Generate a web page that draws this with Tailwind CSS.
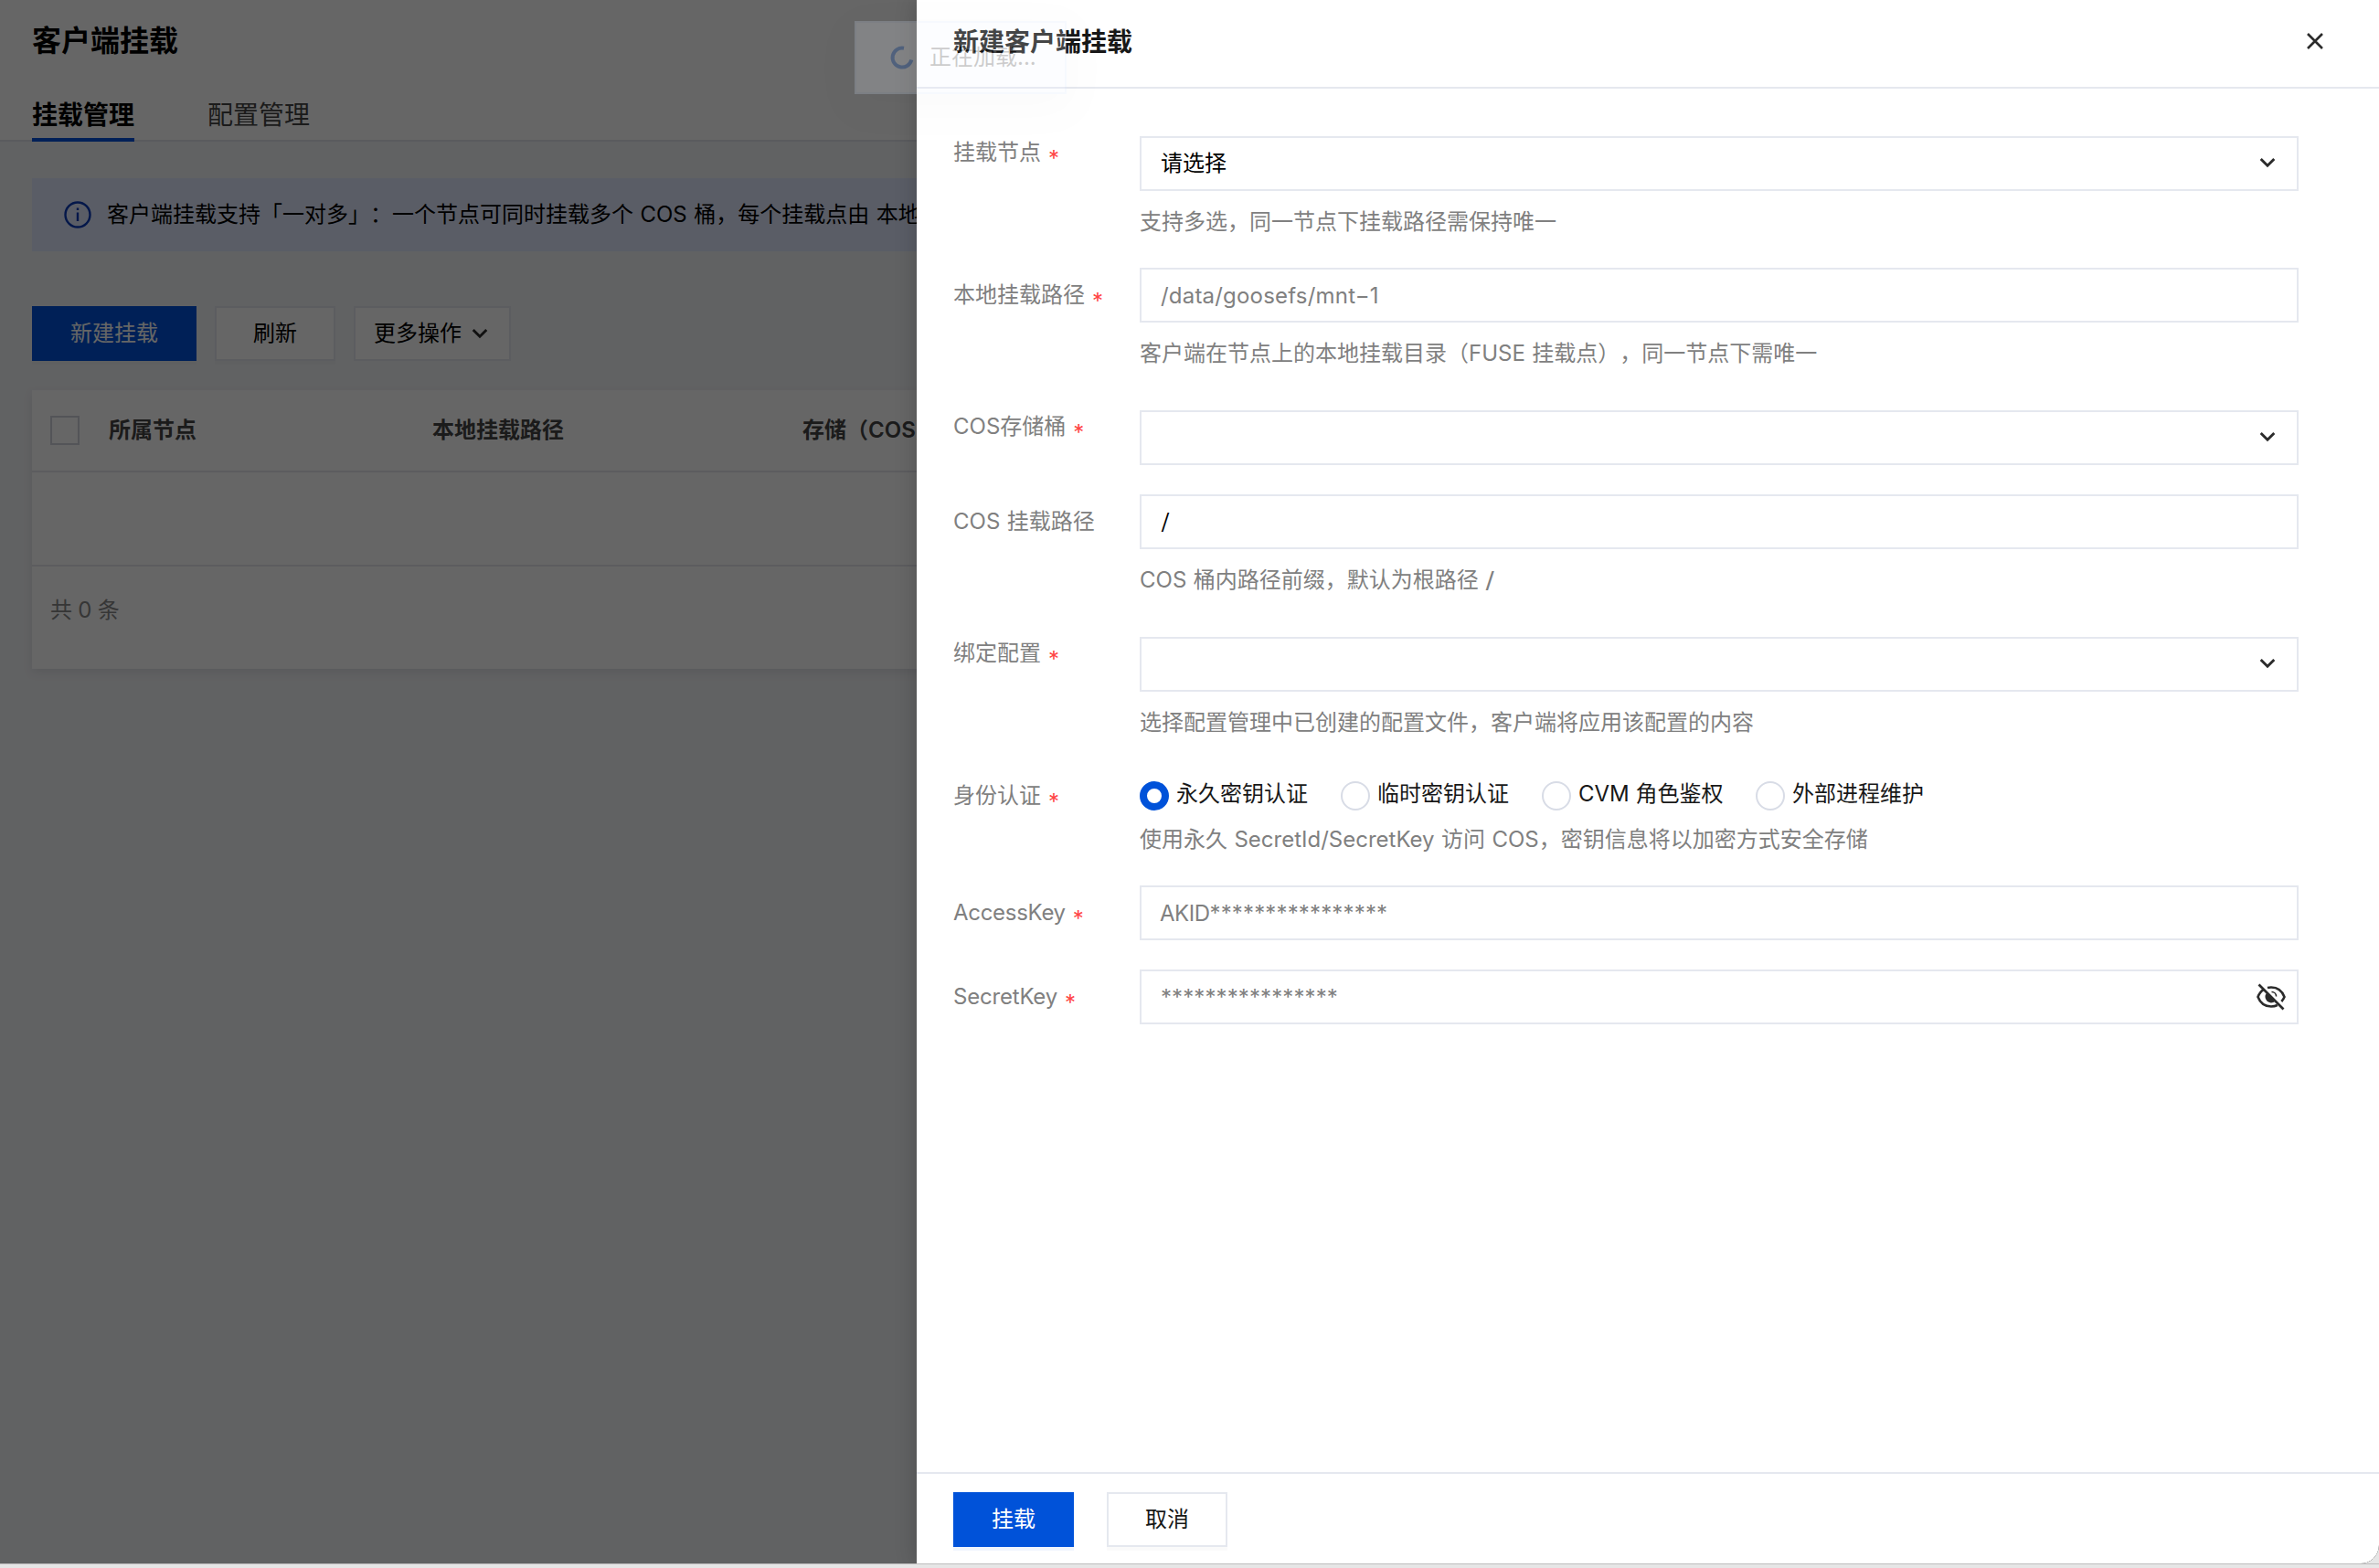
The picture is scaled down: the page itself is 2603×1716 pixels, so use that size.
<!DOCTYPE html>
<html lang="zh-CN">
<head>
<meta charset="utf-8">
<title>客户端挂载</title>
<script src="https://cdn.jsdelivr.net/npm/@tailwindcss/browser@4"></script>
</head>
<body class="relative h-[1716px] w-[2603px] overflow-hidden bg-[#e6e6e6] font-['Inter','Noto_Sans_CJK_SC',sans-serif] text-2xl leading-9 text-[#181818] [text-spacing-trim:space-all] [word-spacing:0.7px]">
<svg class="hidden">
  <symbol id="chev" viewBox="0 0 20 14"><path d="M2.700 3l7.300 7.300 7.300-7.300" fill="none" stroke="#2b2b2b" stroke-width="2.900"/></symbol>
</svg>

<div class="relative h-[1711px] overflow-hidden rounded-br-[20px] bg-[#f3f4f7]">
  <!-- page -->
  <header class="h-[155px] border-b-2 border-[#e1e3ea] bg-white px-[35px] pt-[25px]">
    <h1 class="text-[32px] font-bold leading-10 text-black">客户端挂载</h1>
    <nav class="mt-[38px] flex h-[52px] gap-20 text-[28px] leading-[46px]">
      <span class="h-[52px] border-b-4 border-[#0052d9] font-bold text-black">挂载管理</span>
      <span class="text-[#444]">配置管理</span>
    </nav>
  </header>
  <main class="px-[35px] pt-10">
    <div class="flex h-20 items-center bg-[#e2e9ff] pl-[35px]">
      <svg class="mr-[17px] size-[30px]" viewBox="0 0 30 30" fill="none" stroke="#0a3bb8" stroke-width="2.4"><circle cx="15" cy="15" r="13.5"/><path d="M15 12.5v9.5M15 7.5v2.6"/></svg>
      <p class="whitespace-nowrap text-black">客户端挂载支持「一对多」：一个节点可同时挂载多个 COS 桶，每个挂载点由 本地挂载路径</p>
    </div>
    <div class="mt-15 flex gap-5">
      <button class="h-15 w-[180px] bg-[#0052d9] text-white shadow-[0_4px_0_rgba(0,0,0,0.02)]">新建挂载</button>
      <button class="h-15 w-[132px] border-2 border-[#e5e8ef] bg-white text-black shadow-[0_4px_0_rgba(0,0,0,0.02)]">刷新</button>
      <button class="flex h-15 w-[172px] items-center gap-[10px] border-2 border-[#e5e8ef] bg-white pl-5 text-black">更多操作<svg class="mb-px h-[14px] w-5"><use href="#chev"/></svg></button>
    </div>
    <section class="mt-8 h-[305px] bg-white shadow-[0_4px_10px_rgba(54,58,80,0.1)]">
      <div class="flex h-[90px] items-center border-b-2 border-[#e5e6ee] pl-5 font-bold text-[#444]">
        <span class="mr-8 size-8 border-2 border-[#d0d2dc]"></span>
        <span class="w-[354px]">所属节点</span>
        <span class="w-[405px]">本地挂载路径</span>
        <span class="font-semibold">存储（COS）</span>
      </div>
      <div class="h-[103px] border-b-2 border-[#e5e6ee]"></div>
      <div class="pl-5 pt-[30px] text-[#888] [word-spacing:-0.5px]">共 0 条</div>
    </section>
  </main>
  <div class="absolute inset-0 bg-black/60"></div>

  <!-- drawer -->
  <aside class="absolute inset-y-0 left-[1003px] right-0 flex flex-col rounded-br-[20px] bg-white shadow-[0_0_24px_rgba(0,0,0,0.2)]">
    <div class="flex h-[97px] items-start justify-between border-b-2 border-[#e5e8ef] pl-10 pr-[60px] pt-[26px]">
      <h2 class="text-[28px] font-bold leading-10">新建客户端挂载</h2>
      <svg class="mt-[9px] size-5" viewBox="0 0 20 20"><path d="M2 2l16 16M18 2L2 18" stroke="#2b2b2b" stroke-width="2.6"/></svg>
    </div>
    <div class="flex-1 pl-10 pt-13 text-[#808080]">
      <div class="flex h-36">
        <div class="w-51">挂载节点<span class="relative top-[7px] ml-2 text-[#ff4545]">*</span></div>
        <div class="w-[1268px]">
          <div class="flex h-15 items-center justify-between border-2 border-[#e5e8ef] pl-[21px] pr-[22px] text-black">请选择<svg class="mb-[2px] h-[14px] w-5"><use href="#chev"/></svg></div>
          <p class="mt-4">支持多选，同一节点下挂载路径需保持唯一</p>
        </div>
      </div>
      <div class="flex h-39">
        <div class="w-51 pt-3">本地挂载路径<span class="relative top-[7px] ml-2 text-[#ff4545]">*</span></div>
        <div class="w-[1268px]">
          <div class="flex h-15 items-center border-2 border-[#e5e8ef] pl-[21px] pt-px tracking-[0.2px]">/data/goosefs/mnt−1</div>
          <p class="mt-4">客户端在节点上的本地挂载目录（FUSE 挂载点），同一节点下需唯一</p>
        </div>
      </div>
      <div class="flex h-23">
        <div class="w-51">COS存储桶<span class="relative top-[7px] ml-2 text-[#ff4545]">*</span></div>
        <div class="flex h-15 w-[1268px] items-center justify-end border-2 border-[#e5e8ef] pr-[22px]"><svg class="mb-[2px] h-[14px] w-5"><use href="#chev"/></svg></div>
      </div>
      <div class="flex h-39">
        <div class="w-51 pt-3">COS 挂载路径</div>
        <div class="w-[1268px]">
          <div class="flex h-15 items-center border-2 border-[#e5e8ef] pl-[21px] text-black"><span class="inline-block origin-left scale-x-120 font-light">/</span></div>
          <p class="mt-4">COS 桶内路径前缀，默认为根路径 <span class="inline-block origin-left scale-x-120">/</span></p>
        </div>
      </div>
      <div class="flex h-39">
        <div class="w-51">绑定配置<span class="relative top-[7px] ml-2 text-[#ff4545]">*</span></div>
        <div class="w-[1268px]">
          <div class="flex h-15 items-center justify-end border-2 border-[#e5e8ef] pr-[22px]"><svg class="mb-[2px] h-[14px] w-5"><use href="#chev"/></svg></div>
          <p class="mt-4">选择配置管理中已创建的配置文件，客户端将应用该配置的内容</p>
        </div>
      </div>
      <div class="flex h-29">
        <div class="w-51">身份认证<span class="relative top-[7px] ml-2 text-[#ff4545]">*</span></div>
        <div class="w-[1268px]">
          <div class="flex h-9 items-center text-[#181818]">
            <span class="mr-2 size-8 rounded-full border-8 border-[#0052d9]"></span><span class="-mt-1 w-45">永久密钥认证</span>
            <span class="mr-2 size-8 rounded-full border-2 border-[#d8dce6]"></span><span class="-mt-1 w-45">临时密钥认证</span>
            <span class="mr-2 size-8 rounded-full border-2 border-[#d8dce6]"></span><span class="-mt-1 w-[194px] [word-spacing:0px]">CVM 角色鉴权</span>
            <span class="mr-2 size-8 rounded-full border-2 border-[#d8dce6]"></span><span class="-mt-1">外部进程维护</span>
          </div>
          <p class="mt-3">使用永久 SecretId/SecretKey 访问 COS，密钥信息将以加密方式安全存储</p>
        </div>
      </div>
      <div class="flex h-23">
        <div class="w-51 pt-3"><span class="tracking-[-0.3px]">AccessKey</span><span class="relative top-[7px] ml-2 text-[#ff4545]">*</span></div>
        <div class="flex h-15 w-[1268px] items-center border-2 border-[#e5e8ef] pl-[20px] pt-[2px]"><span class="tracking-[-0.5px]">AKID</span><span class="tracking-[0.15px]">****************</span></div>
      </div>
      <div class="flex h-23">
        <div class="w-51 pt-3"><span class="tracking-[-0.2px]">SecretKey</span><span class="relative top-[7px] ml-2 text-[#ff4545]">*</span></div>
        <div class="flex h-15 w-[1268px] items-center justify-between border-2 border-[#e5e8ef] pl-[21px] pr-[11px]"><span class="pt-[2px] tracking-[0.1px]">****************</span>
          <svg class="h-8 w-[34px]" viewBox="0 0 34 32" fill="none" stroke="#2b2b2b" stroke-width="2.6">
            <path d="M13 5.9C14.300 5.600 15.600 5.500 17 5.500C24 5.500 29 9.500 31.500 16C30.700 18 29.700 19.500 28.300 21M9 7.800C6 9.500 3.800 12.500 2.500 16C5 22.500 10 26.500 17 26.500C19.500 26.500 21.800 26 23.800 25"/>
            <path d="M12.300 11.500A6 6 0 1 0 21.500 20.500Z" fill="#2b2b2b" stroke="none"/>
            <path d="M17.500 10.500C20.500 10.500 22.500 12.700 22.600 15.500" stroke-width="1.600"/>
            <path d="M3.500 2.500L30.500 29.500"/>
          </svg>
        </div>
      </div>
    </div>
    <footer class="flex h-[100px] gap-9 border-t-2 border-[#e5e8ef] pl-10 pt-5">
      <button class="h-15 w-[132px] bg-[#0052d9] text-white shadow-[0_4px_0_rgba(0,82,217,0.06)]">挂载</button>
      <button class="h-15 w-[132px] border-2 border-[#e5e8ef] bg-white shadow-[0_4px_0_rgba(0,0,0,0.02)]">取消</button>
    </footer>
  </aside>

  <!-- fading toast -->
  <div class="absolute left-[935px] top-[23px] flex h-20 w-[232px] items-center border-2 border-[#d4e3fc] bg-[#f2f6ff] pl-[36px] opacity-[0.2] shadow-[0_12px_40px_rgba(0,0,0,0.08)]">
    <svg class="mr-[16px] size-7" viewBox="0 0 28 28"><path d="M16 3.700A10.500 10.500 0 1 0 24.300 16.500" fill="none" stroke="#0052d9" stroke-width="4"/></svg>
    <span class="text-black">正在加载...</span>
  </div>
</div>
<div class="h-px bg-[#bdbdbd]"></div>
</body>
</html>
